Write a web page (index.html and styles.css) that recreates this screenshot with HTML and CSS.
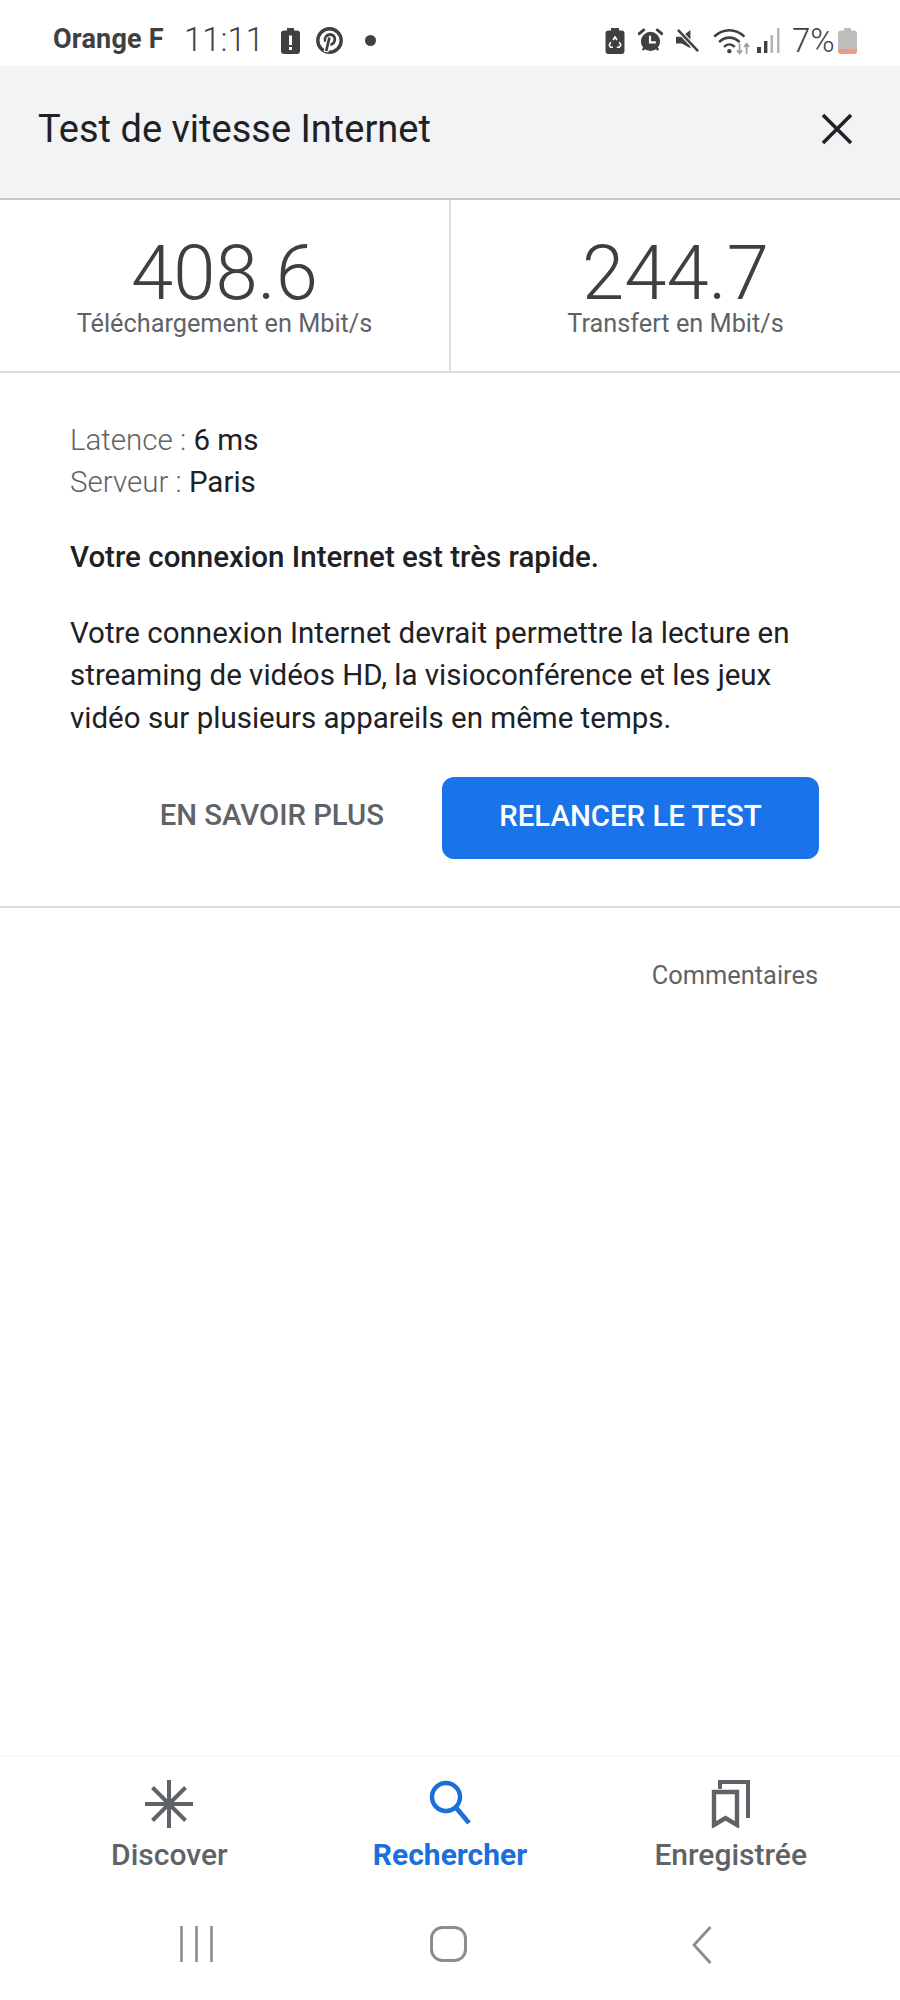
FILE: index.html
```html
<!DOCTYPE html>
<html lang="fr">
<head>
    <meta charset="UTF-8">
    <meta name="viewport" content="width=device-width, initial-scale=1.0">
    <title>Test de vitesse Internet</title>
    <link rel="stylesheet" href="styles.css">
</head>
<body>

    <div class="phone">
        <!-- Status Bar -->
        <div class="status-bar">
            <div class="status-left">
                <span class="carrier">Orange F</span>
                <span class="clock">11:11</span>
                <svg class="ic-battery-alert" viewBox="0 0 19 26"><path d="M6 0h7v2.5h3a3 3 0 0 1 3 3V23a3 3 0 0 1-3 3H3a3 3 0 0 1-3-3V5.5a3 3 0 0 1 3-3h3z" fill="#3f4042"/><path d="M8 7.5h3V17H8zM8 19h3v3H8z" fill="#fff"/></svg>
                <svg class="ic-pinterest" viewBox="0 0 27 27"><circle cx="13.5" cy="13.5" r="11.7" fill="none" stroke="#3f4042" stroke-width="3.4"/><path d="M9.5 14.8c-1.500-3.800 1-7.300 4.500-7.300 3.200 0 5 2.200 4.800 5-.2 3-2.200 5-4.300 4.800-1.100-.1-1.700-.7-2-1.300" fill="none" stroke="#3f4042" stroke-width="2.8"/><path d="M13.400 10.500L10 25" stroke="#fff" stroke-width="5"/><path d="M13.400 10.500L10.200 24" stroke="#3f4042" stroke-width="2.7"/></svg>
                <span class="dot"></span>
            </div>
            <div class="status-right">
                <svg class="ic-battery-save" viewBox="0 0 20 26"><path d="M6 0h8v2.5h2.500a3 3 0 0 1 3 3V23a3 3 0 0 1-3 3h-13a3 3 0 0 1-3-3V5.500a3 3 0 0 1 3-3H6z" fill="#3f4042"/><path d="M8 12l2-3 2 3M14.300 14l1.500 3-1.500 2.300h-2.500M8 19.300H5.500L4.300 17l1.500-3" fill="none" stroke="#fff" stroke-width="1.6"/></svg>
                <svg class="ic-alarm" viewBox="0 0 26 26"><circle cx="13" cy="14" r="10" fill="#3f4042"/><path d="M1 6l5-4M25 6l-5-4" stroke="#3f4042" stroke-width="3" stroke-linecap="round"/><path d="M5 23l2-3M21 23l-2-3" stroke="#3f4042" stroke-width="2.5"/><path d="M12.500 8v7h6" fill="none" stroke="#fff" stroke-width="2.2"/></svg>
                <svg class="ic-mute" viewBox="0 0 25 25"><path d="M0 8h6l9-7v19L6 15H0z" fill="#3f4042"/><path d="M3 2l20 21" stroke="#fff" stroke-width="5"/><path d="M2 1l21 22" stroke="#3f4042" stroke-width="2.6"/></svg>
                <svg class="ic-wifi" viewBox="0 0 34 26"><path d="M1 9c8-8 20-8 28 0M5.500 14c5.500-5.500 13.500-5.500 19 0M10 18.500c3-3 7-3 10 0" fill="none" stroke="#3f4042" stroke-width="2.4"/><circle cx="15" cy="22.5" r="2" fill="#3f4042"/><path d="M24.500 15v9M22 21.500l2.500 3 2.500-3" fill="none" stroke="#9c9c9c" stroke-width="1.5"/><path d="M31 25v-9M28.700 18.500l2.300-3 2.300 3" fill="none" stroke="#9c9c9c" stroke-width="1.5"/></svg>
                <svg class="ic-signal" viewBox="0 0 23 25"><path d="M0 19h4v6H0z" fill="#3f4042"/><path d="M7 13h3.400v12H7z" fill="#3f4042"/><path d="M13.500 7H16v18h-2.500zM20 0h2.500v25H20z" fill="#b5b5b5"/></svg>
                <span class="battery-pct">7%</span>
                <svg class="ic-battery" viewBox="0 0 19 26"><path d="M6 0h7v2.500h3a3 3 0 0 1 3 3V21H0V5.500a3 3 0 0 1 3-3h3z" fill="#bdbdbd"/><path d="M0 21h19v2a3 3 0 0 1-3 3H3a3 3 0 0 1-3-3z" fill="#ee9a80"/></svg>
            </div>
        </div>

        <!-- Header -->
        <div class="header">
            <h1>Test de vitesse Internet</h1>
            <svg class="close-icon" viewBox="0 0 32 32"><path d="M2 2l28 28M30 2L2 30" fill="none" stroke="#202124" stroke-width="3.6"/></svg>
        </div>

        <!-- Results -->
        <div class="stats">
            <div class="stat">
                <div class="stat-value">408.6</div>
                <div class="stat-label">Téléchargement en Mbit/s</div>
            </div>
            <div class="stat">
                <div class="stat-value">244.7</div>
                <div class="stat-label">Transfert en Mbit/s</div>
            </div>
        </div>

        <!-- Details -->
        <div class="details">
            <p class="meta"><span>Latence : </span>6 ms</p>
            <p class="meta"><span>Serveur : </span>Paris</p>
            <p class="verdict">Votre connexion Internet est très rapide.</p>
            <p class="description">Votre connexion Internet devrait permettre la lecture en streaming de vidéos HD, la visioconférence et les jeux vidéo sur plusieurs appareils en même temps.</p>
            <div class="actions">
                <a class="link-btn">EN SAVOIR PLUS</a>
                <a class="btn">RELANCER LE TEST</a>
            </div>
        </div>

        <div class="feedback">Commentaires</div>

        <!-- Bottom Navigation -->
        <div class="bottom-nav">
            <div class="nav-item">
                <svg viewBox="0 0 48 48"><path d="M24 0v48M0 24h48M7.500 7.500l33 33M40.500 7.500l-33 33" fill="none" stroke="#5f6368" stroke-width="4"/></svg>
                <span>Discover</span>
            </div>
            <div class="nav-item active">
                <svg viewBox="0 0 48 48"><circle cx="20" cy="17" r="14" fill="none" stroke="#1a6fdc" stroke-width="4.4"/><path d="M29.500 27L43 43" stroke="#1a6fdc" stroke-width="4.8"/></svg>
                <span>Rechercher</span>
            </div>
            <div class="nav-item">
                <svg viewBox="0 0 48 48"><path d="M7 12h23v33l-11.500-7L7 45z" fill="none" stroke="#5f6368" stroke-width="4.4"/><path d="M13 9V2h28v36" fill="none" stroke="#5f6368" stroke-width="4"/></svg>
                <span>Enregistrée</span>
            </div>
        </div>

        <!-- System Navigation -->
        <div class="system-nav">
            <svg class="sys-recents" viewBox="0 0 33 36"><path d="M1.500 0v36M16.500 0v36M31.500 0v36" stroke="#8c8c8c" stroke-width="2.6"/></svg>
            <svg class="sys-home" viewBox="0 0 37 36"><rect x="1.5" y="1.5" width="34" height="33" rx="11" fill="none" stroke="#8c8c8c" stroke-width="3"/></svg>
            <svg class="sys-back" viewBox="0 0 20 38"><path d="M18.500 1L2 19l16.500 18" fill="none" stroke="#8c8c8c" stroke-width="2.8"/></svg>
        </div>
    </div>

</body>
</html>
```
FILE: styles.css
```css
/* General Styles */
body { font-family: Roboto, "Liberation Sans", sans-serif; background-color: #fff; margin: 0; padding: 0; color: #202124; }
svg { display: block; flex: none; }
.phone { display: flex; flex-direction: column; height: 2000px; overflow: hidden; }

/* Status Bar */
.status-bar { height: 66px; display: flex; justify-content: space-between; align-items: center; padding: 15px 43px 0 53px; box-sizing: border-box; color: #3f4042; }
.status-left, .status-right { display: flex; align-items: center; }
.carrier { font-size: 27px; font-weight: 700; width: 131px; letter-spacing: 0.2px; margin-bottom: 3px; }
.clock { font-size: 33px; font-weight: 300; width: 97px; margin-bottom: 3px; }
.ic-battery-alert { width: 19px; height: 26px; margin-right: 16px; }
.ic-pinterest { width: 27px; height: 27px; margin-right: 22px; }
.dot { width: 11px; height: 11px; border-radius: 50%; background-color: #3f4042; }
.ic-battery-save { width: 20px; height: 26px; margin-right: 13px; }
.ic-alarm { width: 25px; height: 25px; margin-right: 13px; }
.ic-mute { width: 24px; height: 24px; margin-right: 13px; }
.ic-wifi { width: 37px; height: 28px; margin-right: 7px; }
.ic-signal { width: 23px; height: 25px; margin-right: 12px; }
.battery-pct { font-size: 33px; font-weight: 300; width: 46px; }
.ic-battery { width: 19px; height: 26px; }

/* Header */
.header { height: 134px; box-sizing: border-box; background-color: #f1f3f4; border-bottom: 2px solid #c4c6c8; display: flex; justify-content: space-between; align-items: center; padding: 0 47px 6px 38px; }
.header h1 { font-size: 38px; font-weight: 400; margin: 0; }
.close-icon { width: 32px; height: 32px; }

/* Results */
.stats { height: 173px; box-sizing: border-box; display: flex; border-bottom: 2px solid #dadce0; }
.stat { flex: 1; text-align: center; padding-top: 30px; }
.stat:first-child { border-right: 2px solid #dadce0; }
.stat-value { font-size: 76px; font-weight: 300; line-height: 86px; color: #3c4043; }
.stat-label { font-size: 25.3px; line-height: 30px; color: #5f6368; margin-top: -7px; }

/* Details */
.details { height: 535px; box-sizing: border-box; padding: 46px 81px 0 70px; border-bottom: 2px solid #dadce0; }
.details p { margin: 0; font-size: 29.5px; line-height: 42.5px; }
.details .meta { line-height: 42px; }
.meta span { color: #5f6368; font-weight: 300; }
.details .verdict { font-weight: 500; margin-top: 33px; }
.details .description { margin-top: 33px; }

/* Buttons */
.actions { display: flex; justify-content: flex-end; align-items: center; margin-top: 38px; }
.link-btn { font-size: 29.3px; font-weight: 500; color: #5f6368; margin: 0 58px 6px 0; }
.btn { width: 377px; height: 82px; box-sizing: border-box; padding-bottom: 4px; background-color: #1a73e8; color: white; border-radius: 12px; font-size: 29.4px; font-weight: 500; display: flex; align-items: center; justify-content: center; }

/* Feedback */
.feedback { flex: 1; font-size: 25.4px; color: #5f6368; text-align: right; padding: 52px 82px 0 0; }

/* Bottom Navigation */
.bottom-nav { height: 135px; box-sizing: border-box; display: flex; border-top: 2px solid #f8f8f8; padding: 23px 29px 0; }
.nav-item { flex: 1; display: flex; flex-direction: column; align-items: center; font-size: 30px; font-weight: 500; color: #5f6368; }
.nav-item svg { width: 48px; height: 48px; margin-bottom: 9px; }
.nav-item.active { color: #1a6fdc; font-weight: 700; }

/* System Navigation */
.system-nav { height: 110px; box-sizing: border-box; display: flex; align-items: flex-start; padding: 36px 0 0 180px; }
.sys-recents { width: 33px; height: 36px; margin-right: 217px; }
.sys-home { width: 37px; height: 36px; margin-right: 225px; }
.sys-back { width: 20px; height: 38px; }
```
